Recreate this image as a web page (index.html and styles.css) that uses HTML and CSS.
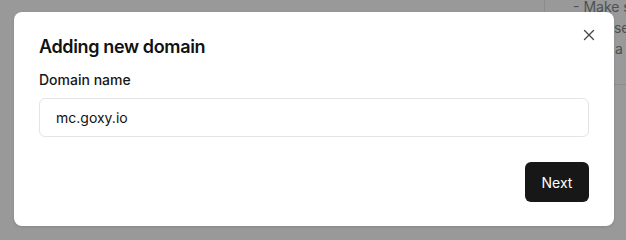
FILE: index.html
```html
<!DOCTYPE html>
<html>
<head>
<meta charset="utf-8">
<link rel="stylesheet" href="styles.css">
</head>
<body>
<div class="page">
  <aside class="panel">
    <p class="line">- Make sure your</p>
    <p class="line indent">the server is</p>
    <p class="line indent2">a record</p>
  </aside>
</div>
<div class="modal">
  <button class="close" aria-label="Close">
    <svg width="12" height="12" viewBox="0 0 12 12"><path d="M1.5 1.5 L10.5 10.5 M10.5 1.5 L1.5 10.5" stroke="#4a4a4a" stroke-width="1.4" stroke-linecap="round"/></svg>
  </button>
  <h2 class="title">Adding new domain</h2>
  <label class="label">Domain name</label>
  <div class="input">mc.goxy.io</div>
  <div class="actions">
    <button class="btn">Next</button>
  </div>
</div>
</body>
</html>
```
FILE: styles.css
```css
html, body {
  margin: 0;
  padding: 0;
}
body {
  width: 626px;
  height: 240px;
  background: #999999;
  font-family: Inter, "Noto Sans", sans-serif;
  overflow: hidden;
  position: relative;
}
.page {
  display: flex;
  justify-content: flex-end;
}
.panel {
  width: 82px;
  height: 85px;
  border-left: 1px solid #8c8c8c;
  border-bottom: 1px solid #8c8c8c;
  box-sizing: border-box;
  padding-left: 28px;
  color: #505050;
  font-size: 14px;
  white-space: nowrap;
  overflow: hidden;
}
.line {
  margin: 0;
  line-height: 21px;
  margin-top: -4px;
}
.line + .line { margin-top: 0; }
.indent { margin-left: 16px; }
.indent2 { margin-left: 42px; }
.modal {
  position: absolute;
  left: 14px;
  top: 12px;
  width: 600px;
  height: 214px;
  box-sizing: border-box;
  background: #ffffff;
  border-radius: 8px;
  box-shadow: 0 1px 3px rgba(0,0,0,0.12);
  padding: 23px 25px 0 25px;
  display: flex;
  flex-direction: column;
}
.close {
  position: absolute;
  right: 19px;
  top: 17px;
  width: 12px;
  height: 12px;
  padding: 0;
  border: 0;
  background: none;
  display: flex;
}
.title {
  margin: 0;
  font-size: 18px;
  line-height: 24px;
  font-weight: 600;
  letter-spacing: -0.02em;
  color: #111111;
}
.label {
  margin-top: 11px;
  font-size: 14px;
  line-height: 20px;
  font-weight: 500;
  color: #161616;
}
.input {
  margin-top: 8px;
  height: 39px;
  box-sizing: border-box;
  border: 1px solid #e4e4e4;
  border-radius: 6px;
  padding: 0 16px;
  display: flex;
  align-items: center;
  font-size: 14px;
  font-weight: 400;
  color: #111111;
}
.actions {
  margin-top: 25px;
  display: flex;
  justify-content: flex-end;
}
.btn {
  width: 64px;
  height: 40px;
  border: 0;
  border-radius: 6px;
  background: #171717;
  color: #ffffff;
  font-family: Inter, "Noto Sans", sans-serif;
  font-size: 14px;
  font-weight: 400;
}
```
